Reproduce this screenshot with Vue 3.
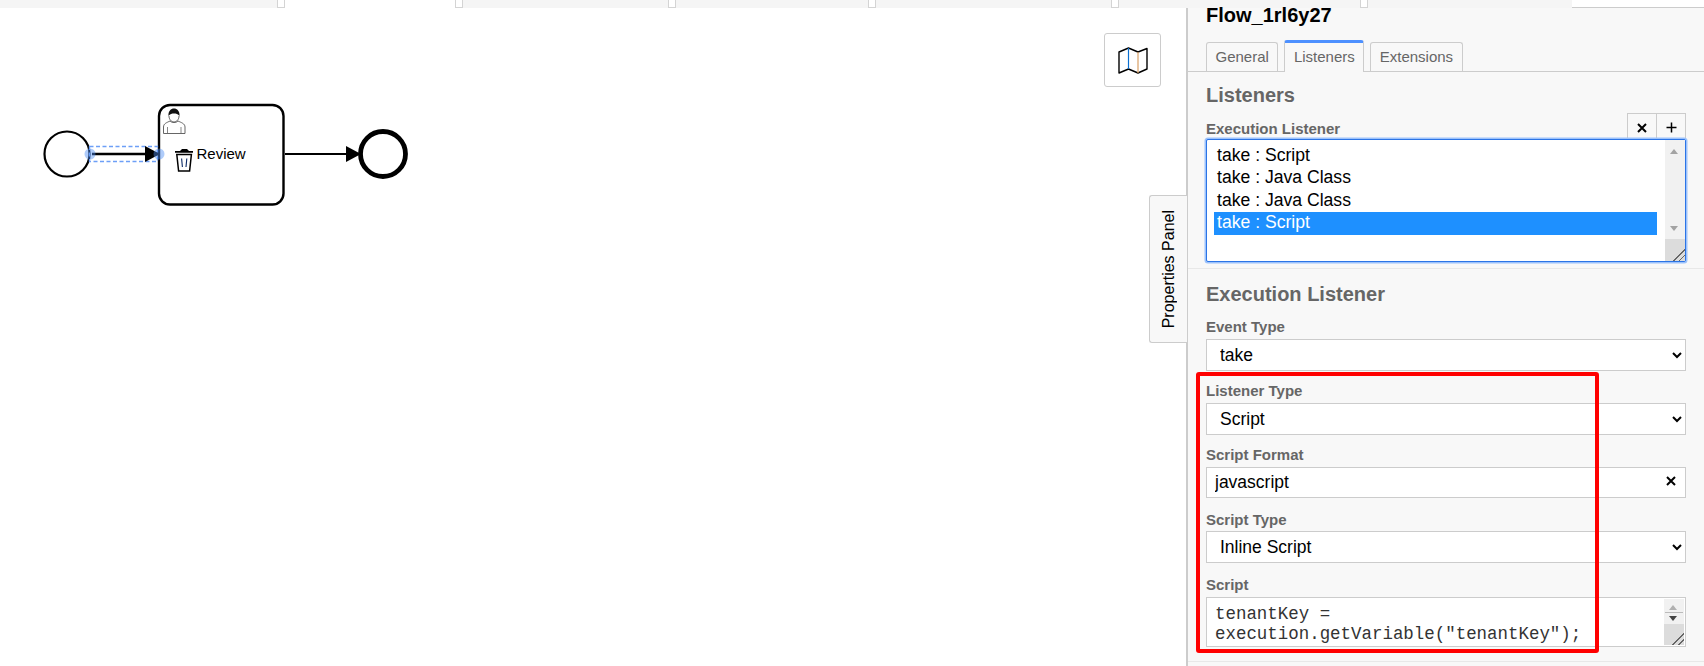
<script setup>
const strip = [
  { w: 277 },
  { w: 8, sep: true },
  { w: 170, active: true },
  { w: 8, sep: true },
  { w: 205 },
  { w: 8, sep: true },
  { w: 192 },
  { w: 8, sep: true },
  { w: 235 },
  { w: 8, sep: true },
  { w: 241 },
  { w: 8, sep: true },
  { w: 204 },
]

const tabs = [
  { name: 'General' },
  { name: 'Listeners', active: true },
  { name: 'Extensions' },
]

const listeners = [
  { text: 'take : Script' },
  { text: 'take : Java Class' },
  { text: 'take : Java Class' },
  { text: 'take : Script', selected: true },
]
</script>

<template>
  <div class="page">
    <div class="strip">
      <div
        v-for="(item, i) in strip"
        :key="i"
        class="strip-item"
        :class="{ sep: item.sep, active: item.active }"
        :style="{ width: item.w + 'px' }"
      ></div>
      <div class="strip-end"></div>
    </div>

    <div class="main">
      <div class="canvas">
        <svg class="diagram" width="420" height="130" viewBox="40 90 420 130">
          <defs>
            <marker id="arrow" markerWidth="16" markerHeight="16" refX="14" refY="8" orient="auto" markerUnits="userSpaceOnUse">
              <path d="M0 0 L15 8 L0 16 Z" fill="#000" />
            </marker>
          </defs>

          <circle cx="67" cy="154" r="22.5" fill="#fff" stroke="#000" stroke-width="2.2" />

          <rect x="159" y="105" width="124.5" height="99.5" rx="11" fill="#fff" stroke="#000" stroke-width="2.4" />

          <path d="M285 154 H360" stroke="#000" stroke-width="2" fill="none" marker-end="url(#arrow)" />
          <circle cx="383" cy="154" r="22.5" fill="#fff" stroke="#000" stroke-width="4.8" />

          <rect x="89.5" y="146.5" width="68" height="15" fill="none" stroke="#6d9ff7" stroke-width="1.3" stroke-dasharray="4 2.5" />
          <path d="M92 154 H159" stroke="#000" stroke-width="2.6" fill="none" marker-end="url(#arrow)" />
          <circle cx="90" cy="154" r="5.5" fill="#4d8ef5" fill-opacity="0.45" />
          <circle cx="159" cy="154" r="5.5" fill="#4d8ef5" fill-opacity="0.45" />

          <!-- user task marker -->
          <path d="M163.5 133.5 V127 C163.5 123.5 167 122.5 170 121 C171.5 123 176.5 123 178 121 C181 122.5 185 123.5 185 127 V133.5 Z" fill="#fff" stroke="#555" stroke-width="0.9" />
          <path d="M167.5 127 V133 M181 127 V133" stroke="#555" stroke-width="0.7" />
          <path d="M169 116 C169 119 171 122 174 122 C177 122 179 119 179 116" fill="#fff" stroke="#555" stroke-width="0.9" />
          <path d="M168.5 116 C168 111 171 108.5 174 108.5 C177 108.5 180 111 179.5 116 C178 114 176 113.5 174 113.5 C172 113.5 170 114 168.5 116 Z" fill="#111" />

          <!-- trash -->
          <path d="M180 151 L182 149 H187 L189 151 H193 V152.8 H175 V151 Z" fill="#000" />
          <path d="M176.8 154.5 L178.6 171 H189.6 L191.4 154.5 Z" fill="#fff" stroke="#000" stroke-width="1.5" />
          <path d="M181.6 158.5 L182.4 167 M186.8 158.5 L186 167" stroke="#0b2a66" stroke-width="1.1" />

          <text x="196.5" y="159" class="task-label">Review</text>
        </svg>

        <button class="map-btn" type="button">
          <svg width="30" height="27" viewBox="0 0 30 27">
            <path d="M1 5 L10.5 1 L20 5 L29 1.5 V22 L20 26 L10.5 22 L1 26 Z" fill="#fff" stroke="#000" stroke-width="1.4" stroke-linejoin="round" />
            <path d="M10.5 1 V22" stroke="#0a6fd0" stroke-width="1.2" />
            <path d="M20 5 V26" stroke="#d9a066" stroke-width="1.2" />
          </svg>
        </button>

        <div class="panel-toggle"><span>Properties Panel</span></div>
      </div>

      <aside class="panel">
        <div class="title">Flow_1rl6y27</div>

        <div class="tabs">
          <div v-for="tab in tabs" :key="tab.name" class="tab" :class="{ active: tab.active }">{{ tab.name }}</div>
        </div>

        <div class="section first">
          <h3>Listeners</h3>
          <div class="list-group">
            <label>Execution Listener</label>
            <div class="list-actions">
              <button type="button">
                <svg width="10" height="10" viewBox="0 0 10 10"><path d="M1 1 L9 9 M9 1 L1 9" stroke="#000" stroke-width="2" /></svg>
              </button>
              <button type="button">
                <svg width="11" height="11" viewBox="0 0 11 11"><path d="M5.5 0.5 V10.5 M0.5 5.5 H10.5" stroke="#000" stroke-width="1.5" /></svg>
              </button>
            </div>
            <div class="listbox">
              <div class="rows">
                <div v-for="(row, i) in listeners" :key="i" class="row" :class="{ selected: row.selected }">{{ row.text }}</div>
              </div>
              <div class="bar">
                <span class="up"></span>
                <span class="down"></span>
                <span class="grip"></span>
              </div>
            </div>
          </div>
        </div>

        <div class="section second">
          <h3>Execution Listener</h3>

          <div class="group">
            <label>Event Type</label>
            <select><option>take</option></select>
          </div>
          <div class="group">
            <label>Listener Type</label>
            <select><option>Script</option></select>
          </div>
          <div class="group">
            <label>Script Format</label>
            <div class="input-wrap">
              <input type="text" value="javascript" />
              <svg class="clear" width="10" height="10" viewBox="0 0 10 10"><path d="M1 1 L9 9 M9 1 L1 9" stroke="#000" stroke-width="2" /></svg>
            </div>
          </div>
          <div class="group after-input">
            <label>Script Type</label>
            <select><option>Inline Script</option></select>
          </div>
          <div class="group last">
            <label>Script</label>
            <div class="script-box">
              <textarea spellcheck="false">tenantKey = execution.getVariable("tenantKey");</textarea>
              <div class="bar small">
                <span class="up"></span>
                <span class="rule"></span>
                <span class="down"></span>
                <span class="grip"></span>
              </div>
            </div>
          </div>
          <div class="end-rule"></div>
        </div>
      </aside>

      <div class="highlight"></div>
    </div>
  </div>
</template>

<style>
html,
body {
  margin: 0;
  background: #fff;
  overflow: hidden;
}
</style>

<style scoped>
.page {
  width: 1704px;
  height: 666px;
  display: flex;
  flex-direction: column;
  font-family: "Liberation Sans", Arial, sans-serif;
  overflow: hidden;
}

.strip {
  height: 8px;
  flex: none;
  display: flex;
  background: #f5f5f5;
}
.strip-item {
  flex: none;
  box-sizing: border-box;
}
.strip-item.sep {
  background: #fff;
  border: 1px solid #d4d4d4;
  border-top: none;
}
.strip-item.active {
  background: #fff;
}
.strip-end {
  flex: 1;
  background: #fff;
  border-bottom: 1px solid #ccc;
  height: 7px;
}

.main {
  flex: 1;
  display: flex;
  position: relative;
  min-height: 0;
}

.canvas {
  flex: 1;
  position: relative;
  background: #fff;
}
.diagram {
  position: absolute;
  left: 40px;
  top: 82px;
}
.task-label {
  font-family: "Liberation Sans", Arial, sans-serif;
  font-size: 15px;
  fill: #000;
}

.map-btn {
  position: absolute;
  left: 1104px;
  top: 25px;
  width: 57px;
  height: 54px;
  padding: 0;
  display: flex;
  align-items: center;
  justify-content: center;
  background: #fff;
  border: 1px solid #ccc;
  border-radius: 3px;
}

.panel-toggle {
  position: absolute;
  left: 1149px;
  top: 187px;
  width: 38px;
  height: 148px;
  box-sizing: border-box;
  background: #f8f8f8;
  border: 1px solid #ccc;
  border-right: none;
  border-radius: 3px 0 0 3px;
  display: flex;
  align-items: center;
  justify-content: center;
  z-index: 2;
}
.panel-toggle span {
  writing-mode: vertical-rl;
  transform: rotate(180deg);
  font-size: 16px;
  color: #000;
  white-space: nowrap;
}

.panel {
  flex: none;
  width: 518px;
  box-sizing: border-box;
  border-left: 2px solid #ccc;
  background: #f8f8f8;
  display: flex;
  flex-direction: column;
}

.title {
  height: 14px;
  line-height: 14px;
  margin-left: 18px;
  font-size: 20px;
  font-weight: bold;
  color: #000;
  white-space: nowrap;
}

.tabs {
  margin-top: 18px;
  height: 32px;
  box-sizing: border-box;
  padding-left: 18px;
  display: flex;
  align-items: flex-end;
  gap: 6px;
  border-bottom: 1px solid #ccc;
  flex: none;
}
.tab {
  height: 29px;
  box-sizing: border-box;
  padding: 0 8.5px;
  line-height: 27px;
  font-size: 15px;
  color: #666;
  border: 1px solid #ccc;
  border-bottom: none;
  border-radius: 3px 3px 0 0;
}
.tab.active {
  height: 32px;
  margin-bottom: -1px;
  line-height: 28px;
  background: #f8f8f8;
  border-top: 3px solid #4d90ff;
}

.section {
  padding: 0 18px;
}
.section.first {
  height: 197px;
  box-sizing: border-box;
  padding-top: 12px;
  border-bottom: 1px solid #e8e8e8;
}
.section.second {
  padding-top: 15px;
  flex: 1;
  position: relative;
}

h3 {
  margin: 0;
  height: 22px;
  line-height: 22px;
  font-size: 20px;
  font-weight: bold;
  color: #666;
}
.section.second h3 {
  line-height: 20px;
}

label {
  display: block;
  height: 16px;
  line-height: 16px;
  font-size: 15px;
  font-weight: bold;
  color: #666;
}

.list-group {
  position: relative;
  margin-top: 15px;
}
.list-actions {
  position: absolute;
  right: 0;
  top: -8px;
  display: flex;
  z-index: 1;
}
.list-actions button {
  width: 30px;
  height: 29px;
  padding: 0;
  margin-left: -1px;
  display: flex;
  align-items: center;
  justify-content: center;
  background: #f8f8f8;
  border: 1px solid #ccc;
}

.listbox {
  position: relative;
  z-index: 2;
  margin-top: 2px;
  height: 123px;
  box-sizing: border-box;
  display: flex;
  background: #fff;
  border: 1px solid #2b74e6;
  border-radius: 2px;
  box-shadow: 0 0 0 1.5px #9cc2fb;
}
.rows {
  flex: 1;
  padding: 5px 8px 0 7px;
}
.row {
  height: 22.4px;
  line-height: 21.6px;
  padding-left: 3px;
  font-size: 17.6px;
  color: #000;
}
.row.selected {
  background: #1e90ff;
  color: #fff;
}

.bar {
  position: relative;
  width: 20px;
  flex: none;
  background: #f1f1f1;
}
.bar .up,
.bar .down {
  position: absolute;
  left: 5px;
  width: 0;
  height: 0;
  border-left: 4.5px solid transparent;
  border-right: 4.5px solid transparent;
}
.bar .up {
  top: 9px;
  border-bottom: 5px solid #a3a3a3;
}
.bar .down {
  top: 86px;
  border-top: 5px solid #a3a3a3;
}
.bar .grip {
  position: absolute;
  left: 0;
  right: 0;
  bottom: 0;
  height: 22px;
  background:
    linear-gradient(135deg, transparent 70%, #666 70%, #666 74%, transparent 74%, transparent 84%, #666 84%, #666 88%, transparent 88%),
    #dcdcdc;
}

.bar.small .up {
  top: 6px;
  border-bottom-color: #b0b0b0;
}
.bar.small .rule {
  position: absolute;
  left: 1px;
  right: 1px;
  top: 13px;
  height: 1px;
  background: #bbb;
}
.bar.small .down {
  top: 17px;
  border-top-color: #444;
}
.bar.small .grip {
  height: 21px;
}

.group {
  margin-top: 12px;
}
.section.second h3 + .group {
  margin-top: 13px;
}
.group label {
  margin-bottom: 4px;
}
.group.after-input {
  margin-top: 14px;
}
.group.after-input label {
  margin-bottom: 3px;
}
.group.last {
  margin-top: 14px;
}

select {
  display: block;
  width: 100%;
  height: 32px;
  box-sizing: border-box;
  padding: 0 9px;
  font-family: "Liberation Sans", Arial, sans-serif;
  font-size: 17.5px;
  color: #000;
  background: #fff;
  border: 1px solid #ccc;
  border-radius: 0;
}

.input-wrap {
  position: relative;
}
.input-wrap input {
  display: block;
  width: 100%;
  height: 31px;
  box-sizing: border-box;
  padding: 0 8px;
  font-family: "Liberation Sans", Arial, sans-serif;
  font-size: 17.5px;
  color: #000;
  background: #fff;
  border: 1px solid #ccc;
  border-radius: 0;
}
.clear {
  position: absolute;
  right: 10px;
  top: 9px;
}

.script-box {
  height: 50px;
  box-sizing: border-box;
  display: flex;
  background: #fff;
  border: 1px solid #ccc;
  padding: 1px;
}
.script-box textarea {
  flex: 1;
  min-width: 0;
  padding: 5px 7px;
  margin: 0;
  border: none;
  outline: none;
  resize: none;
  overflow: hidden;
  font-family: "Liberation Mono", "Courier New", monospace;
  font-size: 17.45px;
  line-height: 20px;
  color: #333;
  background: #fff;
}

.end-rule {
  height: 1px;
  margin: 14px -18px 0;
  background: #e8e8e8;
}

.highlight {
  position: absolute;
  left: 1196px;
  top: 364px;
  width: 403px;
  height: 281px;
  box-sizing: border-box;
  border: 4px solid #f00;
  border-radius: 3px;
  z-index: 3;
  pointer-events: none;
}
</style>
